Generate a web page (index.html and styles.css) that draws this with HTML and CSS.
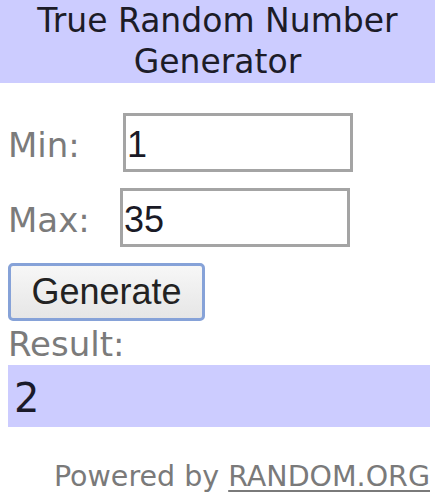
FILE: index.html
```html
<!DOCTYPE html>
<html>
<head>
<meta charset="utf-8">
<link rel="stylesheet" href="styles.css">
</head>
<body>
<div class="widget">
  <div class="header">True Random Number Generator</div>
  <div class="form">
    <div class="field">
      <label class="label">Min:</label>
      <input class="input" type="text" value="1">
    </div>
    <div class="field">
      <label class="label">Max:</label>
      <input class="input input-max" type="text" value="35">
    </div>
    <button class="button">Generate</button>
    <div class="result-label">Result:</div>
    <div class="result">2</div>
    <div class="powered">Powered by <a class="link" href="#">RANDOM.ORG</a></div>
  </div>
</div>
</body>
</html>
```

FILE: styles.css
```css
html, body {
  margin: 0;
  padding: 0;
  background: #ffffff;
}

body {
  font-family: "DejaVu Sans", "Verdana", sans-serif;
}

.widget {
  width: 435px;
}

.header {
  background: #ccccff;
  height: 83px;
  text-align: center;
  font-size: 33px;
  line-height: 41px;
  color: #1c1c28;
}

.form {
  margin-left: 8px;
  width: 422px;
  display: flex;
  flex-direction: column;
  align-items: flex-start;
}

.field {
  display: flex;
  align-items: baseline;
  margin-top: 16px;
}

.field:first-child {
  margin-top: 30px;
}

.label {
  width: 115px;
  font-size: 34px;
  line-height: 40px;
  color: #7b7b7b;
}

.input {
  box-sizing: border-box;
  width: 230px;
  height: 59px;
  margin: 0;
  border: 3px solid #a4a4a4;
  padding: 5px 2px 0 1px;
  font-family: "Liberation Sans", Arial, sans-serif;
  font-size: 36px;
  color: #1a1a26;
  background: #ffffff;
  outline: none;
}

.input-max {
  margin-left: -3px;
}

.button {
  box-sizing: border-box;
  margin-top: 16px;
  width: 197px;
  height: 58px;
  padding: 0;
  border: 3px solid #86a2d8;
  border-radius: 5px;
  background: linear-gradient(#f7f7f7, #e6e6e6);
  font-family: "Liberation Sans", Arial, sans-serif;
  font-size: 36px;
  color: #222222;
}

.result-label {
  margin-top: 3px;
  font-size: 34px;
  line-height: 40px;
  color: #7b7b7b;
}

.result {
  box-sizing: border-box;
  margin-top: 1px;
  width: 422px;
  height: 62px;
  padding: 5px 0 0 6px;
  background: #ccccff;
  font-size: 40px;
  line-height: 57px;
  color: #1a1a2a;
}

.powered {
  align-self: stretch;
  margin-top: 33px;
  text-align: right;
  font-size: 28.5px;
  line-height: 34px;
  color: #7a7a7a;
}

.link {
  color: #7a7a7a;
  text-decoration: underline;
  text-decoration-thickness: 2px;
  text-underline-offset: 4px;
}
```
